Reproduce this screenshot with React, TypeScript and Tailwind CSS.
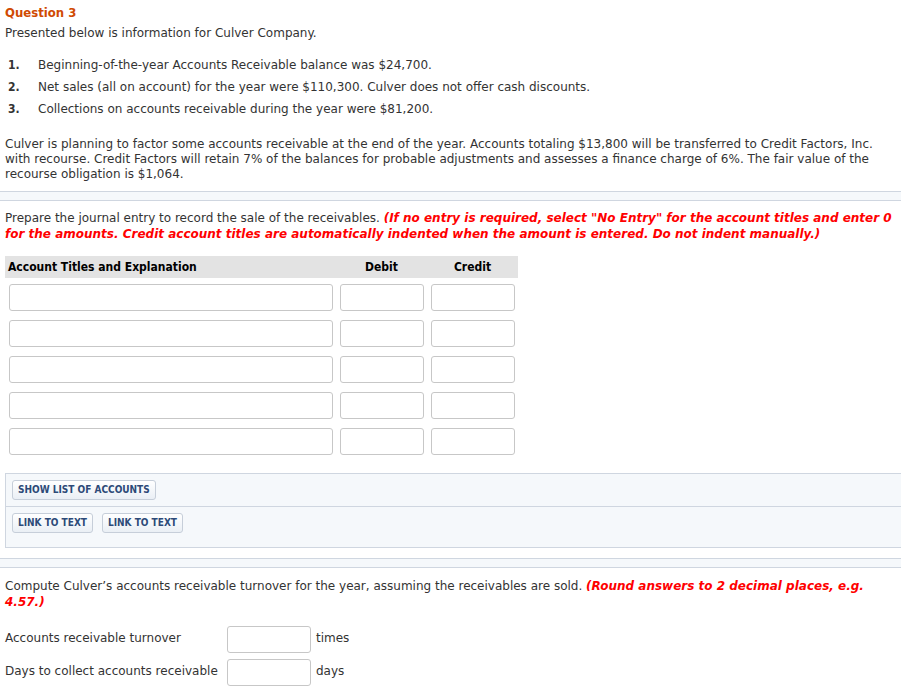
import React from 'react';

const font = { fontFamily: '"DejaVu Sans", Verdana, sans-serif' };
const cond = { fontFamily: '"DejaVu Sans Condensed", "DejaVu Sans", Verdana, sans-serif' };

function Field({ className }: { className: string }) {
  return <div className={`h-[27px] rounded-[3px] border border-[#c7c7c7] bg-white ${className}`} />;
}

function Btn({ children }: { children: React.ReactNode }) {
  return (
    <button
      className="h-[20px] rounded-[3px] border border-[#c6ced9] bg-gradient-to-b from-white to-[#eaeff5] px-[5px] text-[10px] font-bold leading-none text-[#2d4a78] font-stretch-condensed"
      style={cond}
    >
      {children}
    </button>
  );
}

function Band() {
  return <div className="h-[10px] border-y border-[#cfd6e0] bg-[#f5f8fb]" />;
}

const facts = [
  'Beginning-of-the-year Accounts Receivable balance was $24,700.',
  'Net sales (all on account) for the year were $110,300. Culver does not offer cash discounts.',
  'Collections on accounts receivable during the year were $81,200.',
];

export default function App() {
  return (
    <div className="min-h-[695px] w-[901px] bg-white text-[12px] text-[#333]" style={font}>
      <div className="px-[5px] pt-[5px]">
        <h2 className="text-[13px] font-bold leading-[16px] text-[#d04a02] font-stretch-condensed" style={cond}>
          Question 3
        </h2>
        <p className="mt-[4px] leading-[16px]">Presented below is information for Culver Company.</p>
        <ol className="mt-[13px]">
          {facts.map((f, i) => (
            <li key={i} className="flex h-[22px] items-center">
              <span className="w-[33px] pl-[3px] font-bold font-stretch-condensed" style={cond}>
                {i + 1}.
              </span>
              <span>{f}</span>
            </li>
          ))}
        </ol>
        <p className="mt-[17px] leading-[15px]">
          Culver is planning to factor some accounts receivable at the end of the year. Accounts totaling $13,800 will be
          transferred to Credit Factors, Inc. with recourse. Credit Factors will retain 7% of the balances for probable
          adjustments and assesses a finance charge of 6%. The fair value of the recourse obligation is $1,064.
        </p>
      </div>

      <div className="mt-[9px]">
        <Band />
      </div>

      <div className="pl-[5px]">
        <p className="mt-[9px] pr-[5px] leading-[16px]">
          Prepare the journal entry to record the sale of the receivables.{' '}
          <em className="font-bold text-[#ff0000]">
            (If no entry is required, select "No Entry" for the account titles and enter 0 for the amounts. Credit
            account titles are automatically indented when the amount is entered. Do not indent manually.)
          </em>
        </p>

        <div className="mt-[14px] w-[513px]">
          <div
            className="flex h-[22px] items-center bg-[#e3e3e3] font-bold text-black font-stretch-condensed"
            style={cond}
          >
            <div className="w-[331px] pl-[3px]">Account Titles and Explanation</div>
            <div className="w-[91px] text-center">Debit</div>
            <div className="w-[91px] text-center">Credit</div>
          </div>
          <div className="flex flex-col gap-[9px] pt-[6px] pl-[4px]">
            {[0, 1, 2, 3, 4].map((r) => (
              <div key={r} className="flex gap-[7px]">
                <Field className="w-[324px]" />
                <Field className="w-[84px]" />
                <Field className="w-[84px]" />
              </div>
            ))}
          </div>
        </div>

        <div className="mt-[18px] border border-r-0 border-[#cfd6e0] bg-[#f5f8fb]">
          <div className="border-b border-[#cfd6e0] px-[6px] py-[6px]">
            <Btn>SHOW LIST OF ACCOUNTS</Btn>
          </div>
          <div className="flex gap-[9px] px-[6px] pt-[6px] pb-[14px]">
            <Btn>LINK TO TEXT</Btn>
            <Btn>LINK TO TEXT</Btn>
          </div>
        </div>
      </div>

      <div className="mt-[10px]">
        <Band />
      </div>

      <div className="px-[5px]">
        <p className="mt-[10px] leading-[16px]">
          Compute Culver’s accounts receivable turnover for the year, assuming the receivables are sold.{' '}
          <em className="font-bold text-[#ff0000]">(Round answers to 2 decimal places, e.g. 4.57.)</em>
        </p>
        <div className="mt-[16px] flex flex-col gap-[6px]">
          <div className="flex items-center">
            <span className="mb-[3px] w-[222px]">Accounts receivable turnover</span>
            <Field className="w-[84px]" />
            <span className="mb-[3px] ml-[5px]">times</span>
          </div>
          <div className="flex items-center">
            <span className="mb-[3px] w-[222px]">Days to collect accounts receivable</span>
            <Field className="w-[84px]" />
            <span className="mb-[3px] ml-[5px]">days</span>
          </div>
        </div>
      </div>
    </div>
  );
}
